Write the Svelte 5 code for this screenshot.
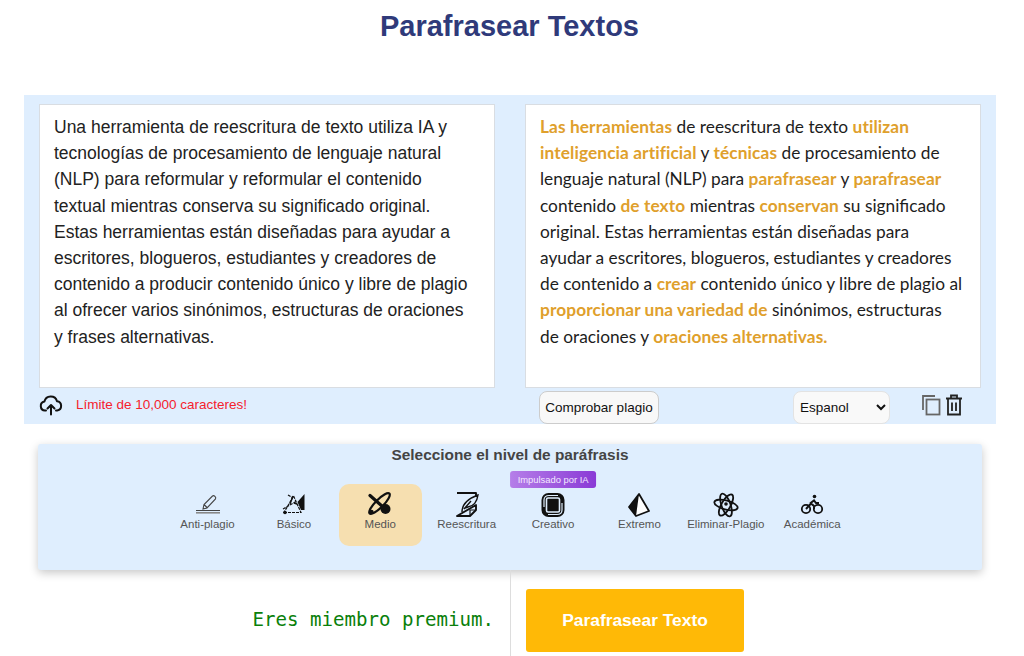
<script>
  const levels = [
    { name: 'Anti-plagio', icon: 'pen' },
    { name: 'Básico', icon: 'basic' },
    { name: 'Medio', icon: 'medio', active: true },
    { name: 'Reescritura', icon: 'quill' },
    { name: 'Creativo', icon: 'creative', badge: 'Impulsado por IA' },
    { name: 'Extremo', icon: 'prism' },
    { name: 'Eliminar-Plagio', icon: 'atom' },
    { name: 'Académica', icon: 'bike' }
  ];
</script>

<main class="page">
  <h1>Parafrasear Textos</h1>

  <section class="editor">
    <div class="col">
      <div class="box source">
        Una herramienta de reescritura de texto utiliza IA y tecnologías de procesamiento de lenguaje natural (NLP) para reformular y reformular el contenido textual mientras conserva su significado original. Estas herramientas están diseñadas para ayudar a escritores, blogueros, estudiantes y creadores de contenido a producir contenido único y libre de plagio al ofrecer varios sinónimos, estructuras de oraciones y frases alternativas.
      </div>
      <div class="tools">
        <svg class="upload" width="24" height="22" viewBox="0 0 24 22" fill="none" stroke="#111" stroke-width="2" stroke-linecap="round" stroke-linejoin="round">
          <path d="M7 16.5H6a4.5 4.5 0 0 1-.6-8.9A6.5 6.5 0 0 1 18 7.2a4.7 4.7 0 0 1 .2 9.3H17" />
          <path d="M12 20.5v-9M8.5 14.5l3.5-3.5 3.5 3.5" />
        </svg>
        <span class="limit">Límite de 10,000 caracteres!</span>
      </div>
    </div>

    <div class="col">
      <div class="box result">
        <b>Las herramientas</b> de reescritura de texto <b>utilizan inteligencia artificial</b> y <b>técnicas</b> de procesamiento de lenguaje natural (NLP) para <b>parafrasear</b> y <b>parafrasear</b> contenido <b>de texto</b> mientras <b>conservan</b> su significado original. Estas herramientas están diseñadas para ayudar a escritores, blogueros, estudiantes y creadores de contenido a <b>crear</b> contenido único y libre de plagio al <b>proporcionar una variedad de</b> sinónimos, estructuras de oraciones y <b>oraciones alternativas.</b>
      </div>
      <div class="tools right">
        <button class="check">Comprobar plagio</button>
        <select class="lang">
          <option>Espanol</option>
        </select>
        <div class="actions">
          <svg width="20" height="22" viewBox="0 0 20 22" fill="none" stroke="#666" stroke-width="1.8">
            <path d="M2 16V2h12" />
            <rect x="5.5" y="5.5" width="13" height="15" />
          </svg>
          <svg width="18" height="22" viewBox="0 0 18 22" fill="none" stroke="#222" stroke-width="1.8">
            <path d="M1 4.5h16M6 4V1.5h6V4M3 5v15.500h12V5M7 8.500v8.500M11 8.500v8.500" />
          </svg>
        </div>
      </div>
    </div>
  </section>

  <section class="levels">
    <h2>Seleccione el nivel de paráfrasis</h2>
    <div class="row">
      {#each levels as level}
        <div class="level" class:active={level.active}>
          {#if level.badge}<span class="badge">{level.badge}</span>{/if}
          <svg width="26" height="26" viewBox="0 0 26 26" fill="none" stroke="#111" stroke-width="1.600">
            {#if level.icon === 'pen'}
              <path stroke="#444" stroke-width="1.100" d="M8 17l1-4.500L17.500 4c1.500-1 4 1 3 3L12 16zM9 12.500l3.500 3.500" />
              <path stroke="#444" stroke-width="1" d="M1 18.500h24" />
              <path stroke="#888" stroke-width="1.600" d="M1 20.800h24" />
            {:else if level.icon === 'basic'}
              <path stroke-width="1.200" stroke-dasharray="3 1" d="M3 20.500h17L12.500 4 3 20.500zM2 17l14-8M7 3l5 3" />
              <path stroke-width="1.500" d="M12 4L9 12M13 11l3 1" />
              <path fill="#111" stroke="none" d="M16.500 10L23.500 2v16h-3.500z" />
              <circle cx="4" cy="20.500" r="1.800" fill="#111" stroke="none" />
            {:else if level.icon === 'medio'}
              <path stroke-width="3.200" stroke-linecap="round" d="M3 3.500l17 15" />
              <ellipse cx="12.500" cy="11.500" rx="14" ry="4" stroke-width="2.200" transform="rotate(-45 12.500 11.500)" />
              <circle cx="18.500" cy="17" r="5" fill="#111" stroke="none" />
              <circle cx="4.500" cy="20" r="2.200" fill="#111" stroke="none" />
            {:else if level.icon === 'quill'}
              <path stroke-width="1.900" stroke-linejoin="round" d="M3 1h19v4M22 13v5l-6 6H3z" />
              <path stroke-width="1.400" d="M8 20c0-8 5-13 16-17-1 7-4 11-10 12l-3 1M10 17l7-8" />
              <path stroke-width="1.200" d="M16 24v-6h6" />
            {:else if level.icon === 'creative'}
              <rect x="1.500" y="1" width="23" height="24" rx="7" fill="#111" stroke="none" />
              <rect x="6.500" y="6" width="13" height="14" rx="1.500" stroke="#dfeefe" stroke-width="1.600" />
              <path stroke="#dfeefe" stroke-width="1.200" d="M4 15V8c0-3 2-4.500 5-4.500h9M22 11v7c0 3-2 4.500-5 4.500H8" />
            {:else if level.icon === 'prism'}
              <path fill="#fff" stroke-width="1.800" stroke-linejoin="round" d="M13 2l10 17-13 5-7-9z" />
              <path fill="#111" stroke="none" d="M13 2l-3 22-7-9z" />
            {:else if level.icon === 'atom'}
              <ellipse cx="13" cy="13" rx="12" ry="4.500" stroke-width="1.800" transform="rotate(15 13 13)" />
              <ellipse cx="13" cy="13" rx="12" ry="4.500" stroke-width="1.800" transform="rotate(70 13 13)" />
              <ellipse cx="13" cy="13" rx="12" ry="4.500" stroke-width="1.800" transform="rotate(-60 13 13)" />
              <circle cx="13" cy="12" r="1.800" fill="#111" stroke="none" />
            {:else}
              <circle cx="7" cy="17" r="4.200" stroke-width="1.800" />
              <circle cx="19" cy="17" r="4.200" stroke-width="1.800" />
              <circle cx="15.500" cy="4.500" r="1.800" fill="#111" stroke="none" />
              <path stroke-width="2" d="M7 17l5-5.500 3 2.500v3M11 11.500l4-3 2 2.500h3" />
            {/if}
          </svg>
          <span class="name">{level.name}</span>
        </div>
      {/each}
    </div>
  </section>

  <section class="submit">
    <div class="member"><span>Eres miembro premium.</span></div>
    <div class="cta"><button>Parafrasear Texto</button></div>
  </section>
</main>

<style>
  :global(body) {
    margin: 0;
    background: #fff;
  }

  .page {
    width: 1024px;
    height: 656px;
    overflow: hidden;
    font-family: "Liberation Sans", Arial, sans-serif;
  }

  h1 {
    margin: 0;
    padding: 9px 5px 0 0;
    height: 95px;
    box-sizing: border-box;
    text-align: center;
    font-size: 29px;
    line-height: 34px;
    font-weight: 700;
    color: #2f3a7a;
  }

  .editor {
    margin: 0 28px 20px 24px;
    height: 329px;
    box-sizing: border-box;
    padding: 9px 15px 0;
    background: #dfeefe;
    display: grid;
    grid-template-columns: 456px 456px;
    column-gap: 30px;
  }

  .box {
    height: 284px;
    box-sizing: border-box;
    background: #fff;
    border: 1px solid #d9dde2;
    padding: 9px 24px 9px 14px;
    font-size: 17.500px;
    line-height: 26.200px;
    color: #222;
  }

  .result {
    padding-right: 17.500px;
    font-family: Lato, sans-serif;
    font-size: 17.300px;
    color: #1d1d1d;
  }

  .result b {
    color: #dfa02c;
    font-weight: 700;
    letter-spacing: 0.1px;
  }

  .tools {
    display: flex;
    align-items: center;
    height: 33px;
  }

  .upload {
    flex: none;
  }

  .limit {
    margin-left: 13px;
    font-size: 13.500px;
    color: #f5212d;
  }

  .right {
    padding: 3px 0 0 14px;
    height: 36px;
    box-sizing: border-box;
  }

  .check {
    width: 120px;
    height: 33px;
    padding: 0;
    border: 1px solid #ccc;
    border-radius: 8px;
    background: #f8f8f8;
    font: 13.500px "Liberation Sans", Arial, sans-serif;
    color: #111;
  }

  .lang {
    margin-left: 134px;
    width: 97px;
    height: 33px;
    padding: 0 2px;
    border: 1px solid #e3e3e3;
    border-radius: 8px;
    background: #f9f9f9;
    font: 13.500px "Liberation Sans", Arial, sans-serif;
    color: #111;
  }

  .actions {
    margin: -6px 0 0 31px;
    display: flex;
    gap: 4px;
  }

  .levels {
    margin: 0 42px 0 38px;
    height: 126px;
    box-sizing: border-box;
    padding-top: 2px;
    background: #dfeefe;
    border-radius: 3px;
    box-shadow: 0 3px 10px rgba(0, 0, 0, 0.22);
  }

  h2 {
    margin: 0;
    text-align: center;
    font-size: 15.400px;
    line-height: 17px;
    font-weight: 700;
    color: #444;
  }

  .row {
    margin: 21px 0 0 128px;
    display: flex;
    gap: 3.400px;
  }

  .level {
    position: relative;
    width: 83px;
    height: 62px;
    flex: none;
    box-sizing: border-box;
    padding-top: 8px;
    border-radius: 10px;
    display: flex;
    flex-direction: column;
    align-items: center;
  }

  .level svg {
    flex: none;
  }

  .active {
    background: #f6dfb0;
  }

  .name {
    margin-top: -1px;
    font-size: 11.500px;
    line-height: 14px;
    color: #555;
    white-space: nowrap;
  }

  .badge {
    position: absolute;
    top: -13px;
    left: 50%;
    transform: translateX(-50%);
    padding: 0 7.500px;
    height: 17px;
    line-height: 17px;
    border-radius: 3px;
    background: linear-gradient(90deg, #b57ee8, #8a3ad6);
    color: #f3e9ff;
    font-size: 9.400px;
    white-space: nowrap;
  }

  .submit {
    display: grid;
    grid-template-columns: 511px 1fr;
    height: 86px;
  }

  .member {
    padding: 39px 16px 0 0;
    text-align: right;
    border-right: 1px solid #ddd;
    height: 86px;
    box-sizing: border-box;
    font: 19.100px/22px "DejaVu Sans Mono", monospace;
    color: #0a800a;
  }

  .cta {
    padding: 19px 0 0 15px;
  }

  .cta button {
    width: 218px;
    height: 63px;
    border: 0;
    border-radius: 3px;
    background: #ffb906;
    color: #fff;
    font: 700 17.400px "Liberation Sans", Arial, sans-serif;
  }
</style>
